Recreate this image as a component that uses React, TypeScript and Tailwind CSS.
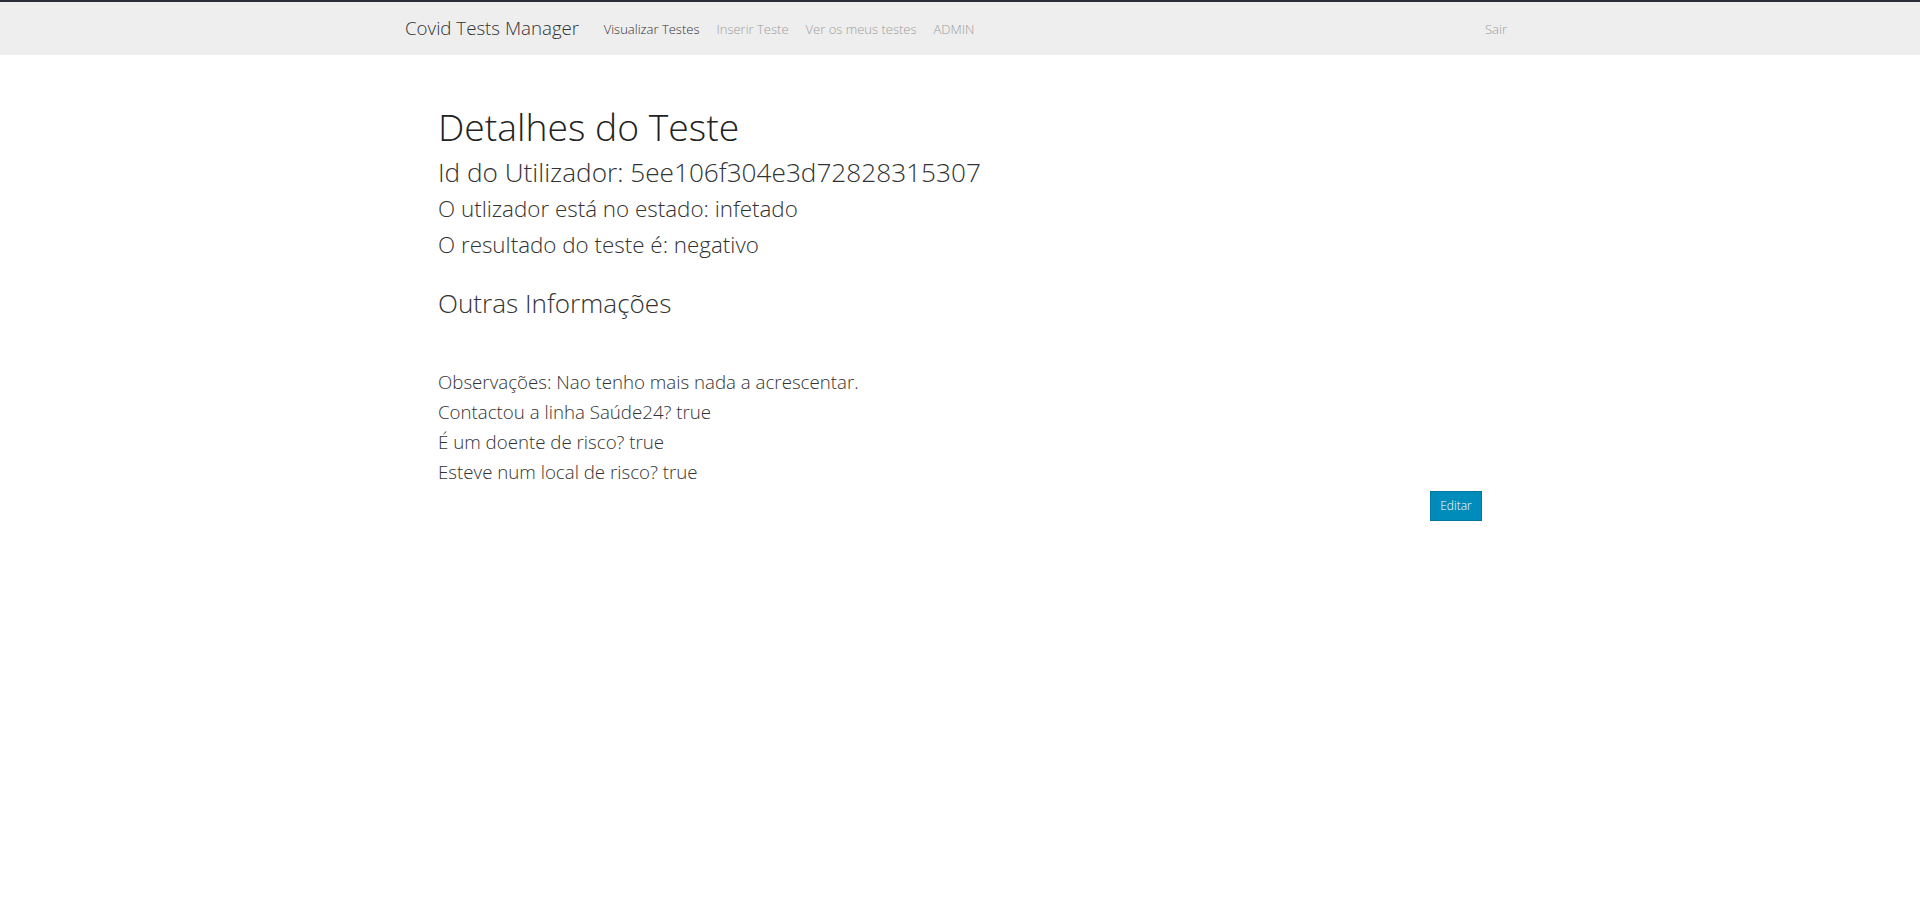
import React from "react";

const navLinks = [
  { label: "Visualizar Testes", active: true },
  { label: "Inserir Teste", active: false },
  { label: "Ver os meus testes", active: false },
  { label: "ADMIN", active: false },
];

export default function App() {
  return (
    <div className="min-h-screen bg-white font-['Open_Sans',sans-serif] font-light text-[#222]">
      {/* Navbar */}
      <nav className="h-[55px] border-t-2 border-[#2a2c36] bg-[#eeeeee]">
        <div className="mx-auto flex h-full w-[1170px] items-center px-[15px]">
          <a href="#" className="px-[15px] text-[18.7px] text-[#333]">
            Covid Tests Manager
          </a>
          <ul className="ml-[1px] flex items-center pb-[2px]">
            {navLinks.map((link) => (
              <li key={link.label}>
                <a
                  href="#"
                  className={
                    link.active
                      ? "px-[8.5px] text-[13px] text-[#333]"
                      : "px-[8.5px] text-[13px] text-[#9d9d9d]"
                  }
                >
                  {link.label}
                </a>
              </li>
            ))}
          </ul>
          <ul className="ml-auto mr-[15px] flex items-center pb-[2px]">
            <li>
              <a href="#" className="px-2 text-[13px] text-[#9d9d9d]">Sair</a>
            </li>
          </ul>
        </div>
      </nav>

      {/* Content */}
      <main className="mx-auto w-[1170px] px-[15px]">
        <div className="pl-[48px] pr-[48px]">
          <h1 className="mt-[50px] text-[37.3px] leading-[43px] text-[#222]">Detalhes do Teste</h1>
          <h3 className="mt-[6px] text-[26.2px] leading-[36px] text-[#333]">
            Id do Utilizador: 5ee106f304e3d72828315307
          </h3>
          <h4 className="mt-[1px] text-[22.4px] leading-[36px] text-[#333]">O utlizador está no estado: infetado</h4>
          <h4 className="text-[22.4px] leading-[36px] text-[#333]">O resultado do teste é: negativo</h4>

          <h3 className="mt-[22px] text-[26.1px] leading-[36px] text-[#333]">Outras Informações</h3>

          <div className="mt-[46px] text-[18.7px] leading-[30px] text-[#333]">
            <p>Observações: Nao tenho mais nada a acrescentar.</p>
            <p>Contactou a linha Saúde24? true</p>
            <p>É um doente de risco? true</p>
            <p>Esteve num local de risco? true</p>
          </div>

          <div className="mt-[4px] flex justify-end">
            <button className="h-[30px] w-[52px] border border-[#0079a1] bg-[#008cba] text-[12px] text-white">
              Editar
            </button>
          </div>
        </div>
      </main>
    </div>
  );
}
